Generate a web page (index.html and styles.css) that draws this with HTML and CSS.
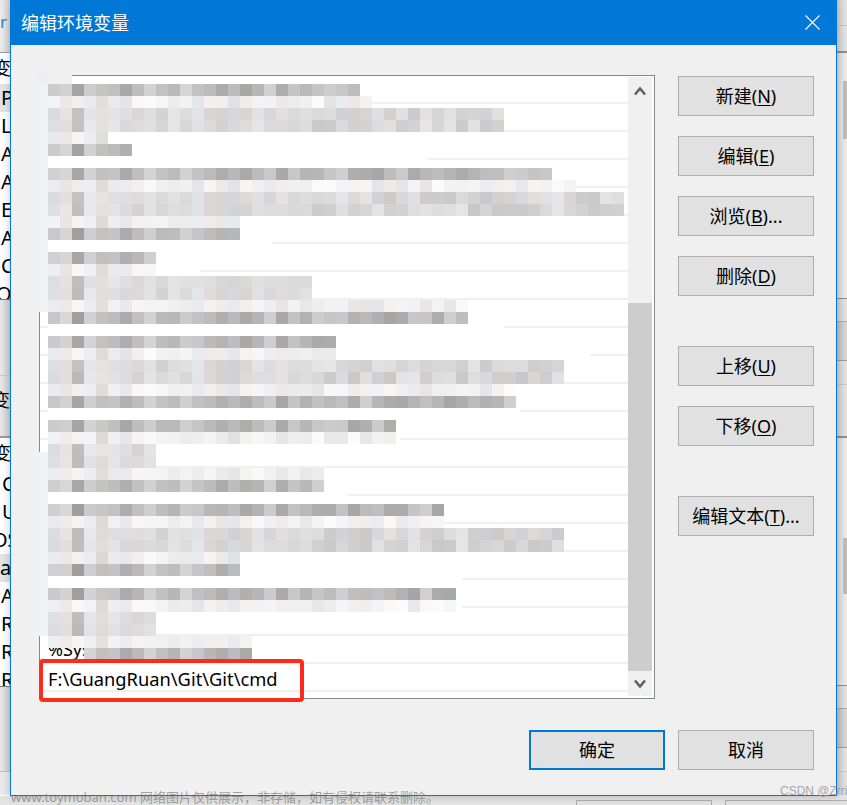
FILE: index.html
```html
<!DOCTYPE html>
<html lang="zh">
<head>
<meta charset="utf-8">
<title>编辑环境变量</title>
<link rel="stylesheet" href="styles.css">
</head>
<body>
<div class="desk">
  <aside class="back-left">
    <div class="bl-head"><span class="bl-r">r</span></div>
    <div class="bl-list bl-list-a">
      <div class="bl-row bl-cut">变量</div>
      <div class="bl-row bl-sel">Path</div>
      <div class="bl-row">LIB</div>
      <div class="bl-row">APP</div>
      <div class="bl-row">ARM</div>
      <div class="bl-row">EDITOR</div>
      <div class="bl-row">AWS</div>
      <div class="bl-row">CLASS</div>
      <div class="bl-row bl-of">OF</div>
    </div>
    <div class="bl-gap bl-gap-a"></div>
    <div class="bl-gap bl-gap-b"><span class="bl-cut bl-cut-b">变</span></div>
    <div class="bl-list bl-list-b">
      <div class="bl-row bl-cut bl-first">变量</div>
      <div class="bl-row bl-in">CO</div>
      <div class="bl-row bl-in">US</div>
      <div class="bl-row bl-os">OS</div>
      <div class="bl-row bl-sel bl-at">at</div>
      <div class="bl-row">APP</div>
      <div class="bl-row">RUN</div>
      <div class="bl-row">RUN</div>
      <div class="bl-row">RUN</div>
    </div>
    <div class="bl-gap bl-gap-c"></div>
    <div class="bl-gap bl-gap-d"></div>
  </aside>

  <section class="dialog">
    <header class="titlebar">
      <h1 class="title">编辑环境变量</h1>
      <svg class="close" viewBox="0 0 15 15" width="15" height="15" aria-label="关闭"><path d="M0.5 0.5 L14.5 14.5 M14.5 0.5 L0.5 14.5"/></svg>
    </header>
    <div class="content">
      <div class="list-wrap">
        <div class="list">
          <div class="rows">
            <div class="row"></div><div class="row"></div><div class="row"></div><div class="row"></div>
            <div class="row"></div><div class="row"></div><div class="row"></div><div class="row"></div>
            <div class="row"></div><div class="row"></div><div class="row"></div><div class="row"></div>
            <div class="row"></div><div class="row"></div><div class="row"></div><div class="row"></div>
            <div class="row"></div><div class="row"></div><div class="row"></div><div class="row"></div>
            <div class="row">%SystemRoot%</div>
            <div class="row row-path">F:\GuangRuan\Git\Git\cmd</div>
          </div>
          <div class="scrollbar">
            <div class="sb-btn sb-up"><svg viewBox="0 0 12 10" width="12" height="10"><path d="M1 8.5 L6 2.5 L11 8.5"/></svg></div>
            <div class="sb-track"><div class="sb-thumb"></div></div>
            <div class="sb-btn sb-down"><svg viewBox="0 0 12 10" width="12" height="10"><path d="M1 1.5 L6 7.5 L11 1.5"/></svg></div>
          </div>
        </div>
        <div class="mosaic" id="mosaic"></div>
        <div class="redbox"></div>
      </div>
      <div class="side">
        <button class="btn">新建(<u>N</u>)</button>
        <button class="btn">编辑(<u>E</u>)</button>
        <button class="btn">浏览(<u>B</u>)...</button>
        <button class="btn">删除(<u>D</u>)</button>
        <button class="btn btn-group">上移(<u>U</u>)</button>
        <button class="btn">下移(<u>O</u>)</button>
        <button class="btn btn-group">编辑文本(<u>T</u>)...</button>
      </div>
    </div>
    <footer class="footer">
      <button class="btn btn-default">确定</button>
      <button class="btn">取消</button>
    </footer>
  </section>

  <aside class="back-right">
    <div class="br-block br-a"></div>
    <div class="br-block br-b"></div>
    <div class="br-scroll"><div class="br-thumb br-thumb-a"></div></div>
    <div class="br-block br-c"></div>
    <div class="br-block br-d"></div>
    <div class="br-block br-e"></div>
    <div class="br-block br-f"></div>
    <div class="br-scroll br-scroll-b"><div class="br-thumb br-thumb-b"></div></div>
    <div class="br-block br-c"></div>
    <div class="br-block br-d"></div>
    <div class="br-block br-e"></div>
    <div class="br-block br-g"></div>
  </aside>

  <div class="back-bottom">
    <div class="bb-btn bb-one"></div>
    <div class="bb-btn bb-two"></div>
  </div>

  <div class="wm-left">www.toymoban.com 网络图片仅供展示，非存储，如有侵权请联系删除。</div>
  <div class="wm-right">CSDN @Zrri</div>
</div>
<script src="mosaic.js"></script>
</body>
</html>
```

FILE: styles.css
```css
* { box-sizing: border-box; }
html, body { margin: 0; padding: 0; }
body {
  width: 847px;
  height: 805px;
  overflow: hidden;
  background: #f0f0f0;
  font-family: "Noto Sans", "Noto Sans CJK SC", sans-serif;
  font-size: 18px;
  color: #000;
}
.desk {
  position: relative;
  display: grid;
  grid-template-columns: 10px 827px 10px;
  grid-template-rows: 796px 9px;
  width: 847px;
  height: 805px;
  overflow: hidden;
}

/* window behind, left edge */
.back-left { overflow: hidden; background: #fff; white-space: nowrap; font-size: 20px; }
.bl-head {
  height: 53px;
  padding: 8px 0 0 0;
  background: linear-gradient(90deg, #ececec, #d4d4d4);
  border-bottom: 1px solid #9a9a9a;
  line-height: 26px;
}
.bl-r { color: #3a7fb5; font-size: 17px; }
.bl-list { overflow: hidden; }
.bl-list-a { height: 247px; border-bottom: 1px solid #777; }
.bl-list-b { height: 249px; border-bottom: 1px solid #777; }
.bl-row { height: 28px; line-height: 28px; padding-left: 1px; }
.bl-list-a .bl-cut { height: 31px; padding-top: 1px; }
.bl-cut { margin-left: -7px; padding-left: 0; font-size: 18px; }
.bl-sel { background: #e4e4e4; }
.bl-of { margin-left: -5px; }
.bl-in { padding-left: 2px; }
.bl-os { margin-left: -9px; }
.bl-at { padding-left: 0; }
.bl-first { height: 32px; line-height: 30px; }
.bl-gap { background: linear-gradient(90deg, #e9e9e9, #cfcfcf); }
.bl-gap-a { height: 76px; border-bottom: 1px solid #c9c9c9; }
.bl-gap-b { height: 62px; border-bottom: 2px solid #9a9a9a; line-height: 56px; white-space: nowrap; overflow: hidden; }
.bl-cut-b { display: block; margin-left: -8px; padding-top: 9px; line-height: 30px; }
.bl-gap-c { height: 85px; border-bottom: 1px solid #bdbdbd; }
.bl-gap-d { height: 23px; background: #e9e9e9; }

/* dialog */
.dialog {
  display: flex;
  flex-direction: column;
  background: #f0f0f0;
  border: solid #0078d7;
  border-width: 0 1px 1px 1px;
  box-shadow: 0 0 8px rgba(0, 0, 0, .22);
  z-index: 1;
}
.titlebar {
  display: flex;
  flex: none;
  align-items: center;
  justify-content: space-between;
  height: 45px;
  padding: 0 17px 0 11px;
  background: #0078d7;
  margin: 0 -1px;
}
.title { margin: 0 0 2px; font-size: 18px; font-weight: 400; color: #fff; font-family: "Noto Sans CJK SC", sans-serif; }
.close { display: block; }
.close path { fill: none; stroke: #fff; stroke-width: 1.1; }

.content { display: flex; flex: none; height: 655px; padding: 30px 0 0 28px; }
.list-wrap { position: relative; flex: none; width: 616px; height: 624px; }
.list {
  display: flex;
  width: 100%;
  height: 100%;
  border: 1px solid #828790;
  background: #fff;
}
.rows { flex: none; width: 588px; overflow: hidden; }
.row {
  height: 28px;
  padding-left: 8px;
  border-bottom: 2px solid #f0f0f0;
  line-height: 27px;
  white-space: nowrap;
  overflow: hidden;
}
.row-path { font-size: 18.3px; line-height: 30px; }
.scrollbar {
  display: flex;
  flex: none;
  flex-direction: column;
  width: 24px;
  height: 619px;
  margin-top: 1px;
  background: #f0f0f0;
}
.sb-btn { display: flex; flex: none; align-items: center; justify-content: center; height: 24px; }
.sb-btn path { fill: none; stroke: #606060; stroke-width: 2.6; }
.sb-up { padding-top: 4px; }
.sb-down { height: 25px; padding-top: 1px; }
.sb-track { flex: 1; padding-top: 202px; }
.sb-thumb { height: 368px; background: #cdcdcd; }

.mosaic { position: absolute; left: -3px; top: -3px; }
.band { display: flex; height: 12px; }
.band-short { height: 5px; }
.cell { flex: none; width: 12px; height: 12px; }
.fill { flex: none; background: #fff; }
.redbox {
  position: absolute;
  left: 0;
  top: 584px;
  width: 265px;
  height: 43px;
  border: 4px solid #ff2a1a;
  border-radius: 4px;
}

.side { display: flex; flex: none; flex-direction: column; gap: 20px; margin: 1px 0 0 23px; }
.btn {
  flex: none;
  width: 136px;
  height: 40px;
  padding: 0;
  border: 1px solid #adadad;
  background: #e1e1e1;
  color: #000;
  font: inherit;
  font-size: 18px;
  line-height: 36px;
}
.btn u { text-decoration-thickness: 1px; text-underline-offset: 2px; }
.btn-group { margin-top: 30px; }
.btn-default { border: 2px solid #0078d7; }
.footer { display: flex; flex: none; gap: 13px; justify-content: flex-end; padding: 30px 22px 0 0; }

/* window behind, right edge */
.back-right { overflow: hidden; background: #e6e6e6; }
.br-block { background: linear-gradient(90deg, #cfcfcf, #e4e4e4); }
.br-a { height: 26px; border-bottom: 1px solid #c4c4c4; }
.br-b { height: 27px; border-bottom: 2px solid #8c8c8c; }
.br-scroll {
  height: 246px;
  padding: 28px 0 0 6px;
  background: linear-gradient(90deg, #d9d9d9, #ececec);
  border-bottom: 1px solid #8c8c8c;
}
.br-scroll-b { height: 248px; padding-top: 100px; }
.br-thumb { width: 4px; background: #bcbcbc; }
.br-thumb-a { height: 58px; }
.br-thumb-b { height: 56px; }
.br-c { height: 23px; border-bottom: 1px solid #a8a8a8; }
.br-d { height: 39px; border-bottom: 1px solid #9c9c9c; background: linear-gradient(90deg, #bdbdbd, #d8d8d8); }
.br-e { height: 24px; border-bottom: 1px solid #c4c4c4; }
.br-f { height: 53px; border-bottom: 2px solid #8c8c8c; }
.br-g { height: 23px; }

.back-bottom {
  grid-column: 1 / 4;
  display: flex;
  padding-top: 4px;
  background: #e3e3e3;
}
.bb-btn { flex: none; width: 136px; height: 6px; border: 1px solid #adadad; border-bottom: 0; background: #e1e1e1; }
.bb-one { margin-left: 576px; }
.bb-two { margin-left: 13px; }

.wm-left {
  position: absolute;
  left: 11px;
  top: 788px;
  z-index: 2;
  font-size: 13px;
  line-height: 18px;
  white-space: nowrap;
  color: rgba(110, 110, 110, .62);
}
.wm-right {
  position: absolute;
  left: 780px;
  top: 783px;
  z-index: 2;
  font-family: "Liberation Sans", sans-serif;
  font-size: 12px;
  line-height: 16px;
  white-space: nowrap;
  color: #a6a6a6;
}
```

FILE: mosaic.js
```js
// The reference list is pixelated: 12px cells, one band per 12px of height.
var ROWS = {
  84:['D',360], 96:['L',372,372], 108:['M',504], 120:['M',504], 132:['L',108,532], 144:['D',132],
  156:[null,0,427], 168:['D',552], 180:['L',565,565], 192:['M',624], 204:['M',624], 216:['L',240,410],
  228:['D',240], 240:[null,0,272], 252:['D',156], 264:['L',156,200], 276:['M',312], 288:['M',312],
  300:['L',468,498], 312:['D',468], 324:[null,0,504], 336:['D',336], 348:['L',336,590], 360:['M',564],
  372:['M',564], 384:['L',516,516], 396:['D',516], 408:[null,0,520], 420:['D',396], 432:['L',396,400],
  444:['M',156], 456:['M',156], 468:['L',324,324], 480:['D',324], 492:[null,0,347], 504:['D',444],
  516:['L',444,444], 528:['M',564], 540:['M',564], 552:['L',240,564], 564:['D',240], 576:[null,0,462],
  588:['D',456], 600:['L',456,462], 612:['M',156], 624:['M',156], 636:['L',252,263], 648:['D',252]
};
var HEADS = {
  D:[204,212,163,207,196,192,172,188,208,190,186,208,196,188,176,188,172,184,205,170,196,182],
  L:[238,234,243,240,222,238,232,243,246,242,238,240,234,240,236,230,240,244,238,234,240,236],
  M:[222,226,190,228,224,226,218,216,224,214,224,220,226,218,212,214,216,224,218,222,216,220]
};
var SPREAD = { D:[165,45], L:[228,24], M:[200,30] };

function noise(col, y) {
  var v = Math.sin(col * 12.9898 + y * 78.233) * 43758.5453;
  return v - Math.floor(v);
}

function grey(type, col, y) {
  var base;
  if (col < HEADS[type].length) {
    base = HEADS[type][col] + Math.round(noise(col, y) * 10) - 5;
  } else {
    base = SPREAD[type][0] + Math.round(noise(col, y) * SPREAD[type][1]);
  }
  var tint = (col * 5 + y) % 3 - 1;
  return 'rgb(' + (base + tint) + ',' + base + ',' + (base - tint) + ')';
}

function band(y, short) {
  var el = document.createElement('div');
  el.className = short ? 'band band-short' : 'band';
  return el;
}

function cell(color) {
  var c = document.createElement('div');
  c.className = 'cell';
  if (color) c.style.background = color;
  return c;
}

var root = document.getElementById('mosaic');
var GUTTER = '#f0f1f3';

var top0 = band(72);
top0.appendChild(cell('#eceef1'));
top0.appendChild(cell('#f0f0f0'));
top0.appendChild(cell('#f0f0f0'));
root.appendChild(top0);

for (var y = 84; y <= 648; y += 12) {
  var r = ROWS[y], el = band(y);
  var hasGutter = y < 312 || (y >= 444 && y < 636);
  el.appendChild(cell(hasGutter ? (y === 444 ? 'linear-gradient(transparent 8px,#f0f1f3 8px)' : GUTTER) : null));
  var x = 48;
  if (r[0]) {
    var col = 0;
    for (; x < r[1]; x += 12, col++) {
      var skip = y === 648 && col < 3;
      el.appendChild(cell(skip ? null : grey(r[0], col, y)));
    }
  }
  if (r[2] && r[2] > x) {
    var f = document.createElement('div');
    f.className = 'fill';
    f.style.width = (r[2] - x) + 'px';
    el.appendChild(f);
  }
  root.appendChild(el);
}

var last = band(660, true);
last.appendChild(cell(null));
var lf = document.createElement('div');
lf.className = 'fill';
lf.style.width = '202px';
last.appendChild(lf);
root.appendChild(last);
```
